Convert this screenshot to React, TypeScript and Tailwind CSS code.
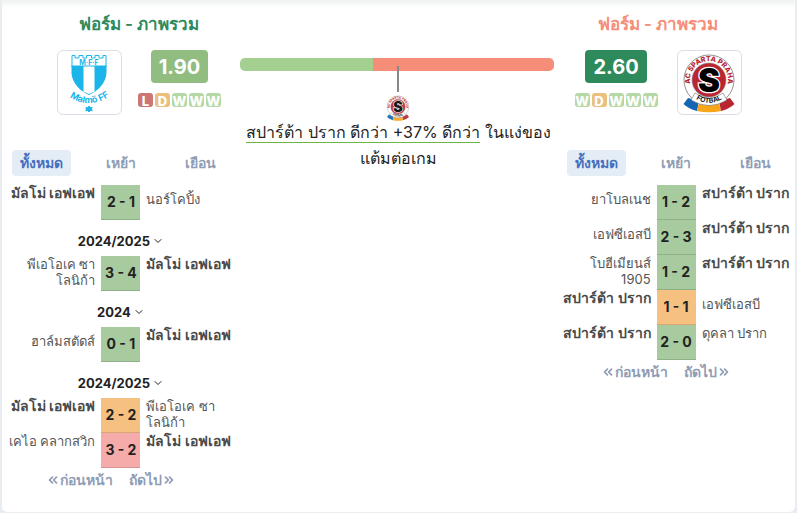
import React, { useState } from 'react';
import { ChevronDown, ChevronsLeft, ChevronsRight } from 'lucide-react';

type Result = 'W' | 'D' | 'L';

type Match = {
  home: string;
  away: string;
  score: string;
  result: Result;
  own: 'home' | 'away';
};

type Season = {
  name?: string;
  matches: Match[];
};

// keeps the last syllables of the name on one line
const PAOK = 'พีเอโอเค ซา\u200bโลนิ\u2060ก้า';

const malmoSeasons: Season[] = [
  {
    matches: [
      { home: 'มัลโม่ เอฟเอฟ', away: 'นอร์โคปิ้ง', score: '2 - 1', result: 'W', own: 'home' },
    ],
  },
  {
    name: '2024/2025',
    matches: [
      { home: PAOK, away: 'มัลโม่ เอฟเอฟ', score: '3 - 4', result: 'W', own: 'away' },
    ],
  },
  {
    name: '2024',
    matches: [
      { home: 'ฮาล์มสตัดส์', away: 'มัลโม่ เอฟเอฟ', score: '0 - 1', result: 'W', own: 'away' },
    ],
  },
  {
    name: '2024/2025',
    matches: [
      { home: 'มัลโม่ เอฟเอฟ', away: PAOK, score: '2 - 2', result: 'D', own: 'home' },
      { home: 'เคไอ คลากสวิก', away: 'มัลโม่ เอฟเอฟ', score: '3 - 2', result: 'L', own: 'away' },
    ],
  },
];

const spartaSeasons: Season[] = [
  {
    matches: [
      { home: 'ยาโบลเนช', away: 'สปาร์ต้า ปราก', score: '1 - 2', result: 'W', own: 'away' },
      { home: 'เอฟซีเอสบี', away: 'สปาร์ต้า ปราก', score: '2 - 3', result: 'W', own: 'away' },
      { home: 'โบฮีเมียนส์ 1905', away: 'สปาร์ต้า ปราก', score: '1 - 2', result: 'W', own: 'away' },
      { home: 'สปาร์ต้า ปราก', away: 'เอฟซีเอสบี', score: '1 - 1', result: 'D', own: 'home' },
      { home: 'สปาร์ต้า ปราก', away: 'ดุคลา ปราก', score: '2 - 0', result: 'W', own: 'home' },
    ],
  },
];

const scoreColors = {
  W: 'bg-[#a7cb9e] border-[#8eb187]',
  D: 'bg-[#f6c180] border-[#d6a674]',
  L: 'bg-[#f6abab] border-[#d69292]',
};

const badgeColors = {
  W: 'bg-[#b5d8a5]',
  D: 'bg-[#ebbf7d]',
  L: 'bg-[#cc7675]',
};

const MalmoLogo = () => (
  <svg viewBox="0 0 60 60" className="h-[60px] w-[60px]" role="img">
    <path
      d="M13 14V2.500H16V5H20V2.500H24V5H27.500V2.500H32.500V5H36V2.500H40V5H44V2.500H47V14Z"
      fill="#fff"
      stroke="#1cb5ea"
      strokeWidth="1"
    />
    <path d="M12.500 12.500H47.500V20C47 30 39 38 30 42C21 38 13 30 12.500 20Z" fill="#1cb5ea" />
    <path d="M24.500 13.500H35.500V38.500L30 41L24.500 38.500Z" fill="#fff" />
    <text x="30" y="11.500" textAnchor="middle" fontSize="7" fontWeight="700" fill="#1cb5ea">
      M·F·F
    </text>
    <path id="malmo-arc" d="M9 43Q30 58 52 42" fill="none" />
    <text fontSize="9" fontWeight="700" fill="#1cb5ea" textAnchor="middle">
      <textPath href="#malmo-arc" startOffset="50%">Malmö FF</textPath>
    </text>
    <path
      d="M30 53L31.300 54.700L33.200 54.500L32.500 56L33.200 57.800L31.300 57.500L30 59L28.700 57.500L26.800 57.800L27.500 56L26.800 54.500L28.700 54.700Z"
      fill="#1cb5ea"
      stroke="#1cb5ea"
    />
  </svg>
);

const SpartaLogo = ({ id, className }: { id: string; className: string }) => (
  <svg viewBox="0 0 60 60" className={className} role="img">
    <path d="M9 45L4.500 51Q9 55.500 18 58L20 48Z" fill="#1565b5" />
    <path d="M20 50L18 58Q30 60.500 42 58L40 50Z" fill="#f9a51a" />
    <path d="M51 45L55.500 51Q51 55.500 42 58L40 48Z" fill="#b92530" />
    <circle cx="30" cy="27" r="25" fill="#fff" stroke="#777" strokeWidth="0.800" />
    <circle cx="30" cy="27" r="17" fill="#b92530" stroke="#8d8d8d" strokeWidth="0.600" />
    <path d="M16 40Q30 51 44 40L48 47Q30 58 12 47Z" fill="#fff" stroke="#555" strokeWidth="0.500" />
    <path id={`${id}-top`} d="M13.200 36A19 19 0 1 1 46.800 36" fill="none" />
    <text fontSize="7" fontWeight="800" fill="#b92530" textAnchor="middle">
      <textPath href={`#${id}-top`} startOffset="50%">AC SPARTA PRAHA</textPath>
    </text>
    <path id={`${id}-bottom`} d="M13 43Q30 57 47 43" fill="none" />
    <text fontSize="7" fontWeight="700" fill="#222" textAnchor="middle">
      <textPath href={`#${id}-bottom`} startOffset="50%">FOTBAL</textPath>
    </text>
    <text
      x="30"
      y="38.500"
      textAnchor="middle"
      fontSize="33"
      fontWeight="900"
      fill="#000"
      stroke="#fff"
      strokeWidth="2.500"
      paintOrder="stroke"
    >
      S
    </text>
  </svg>
);

const FormBadges = ({ form }: { form: Result[] }) => (
  <ul className="flex gap-0.5">
    {form.map((item, index) => (
      <li
        key={index}
        className={`flex h-3.5 w-[15px] justify-center rounded-[3px] text-[13px] leading-4 font-extrabold text-white ${badgeColors[item]}`}
      >
        {item}
      </li>
    ))}
  </ul>
);

const LogoBox = ({ children }: { children: React.ReactNode }) => (
  <div className="flex h-[65px] w-[65px] shrink-0 items-center justify-center rounded-md border border-[#dcdde8] bg-white">
    {children}
  </div>
);

const TeamName = ({ name, own }: { name: string; own: boolean }) => (
  <span
    className={
      own
        ? 'block text-sm leading-4 font-semibold whitespace-nowrap text-[#4a4a4a]'
        : `block text-[13px] leading-4 text-[#555] ${name.includes(' ') ? '' : 'pt-1.5'}`
    }
  >
    {name}
  </span>
);

const MatchTable = ({ seasons }: { seasons: Season[] }) => {
  const [tab, setTab] = useState(0);
  return (
    <section>
      <div className="grid grid-cols-3">
        {['ทั้งหมด', 'เหย้า', 'เยือน'].map((label, index) => (
          <button
            key={label}
            type="button"
            onClick={() => setTab(index)}
            className={`mx-auto h-[26px] rounded-sm px-2 text-sm font-semibold ${
              tab === index ? 'bg-[#e4ecf6] text-[#4770c0]' : 'text-[#8f9db5]'
            }`}
          >
            {label}
          </button>
        ))}
      </div>
      <table className="mt-[9px] w-full table-fixed border-separate border-spacing-0 text-sm leading-4">
        <colgroup>
          <col />
          <col className="w-[39px]" />
          <col />
        </colgroup>
        {seasons.map((season, index) => (
          <tbody key={index}>
            {season.name && (
              <tr>
                <th colSpan={3} className="h-9 p-0 pt-1.5 leading-4">
                  <button
                    type="button"
                    className="inline-flex items-center gap-0.5 text-[13px] font-bold text-[#222]"
                  >
                    {season.name}
                    <ChevronDown size={12} />
                  </button>
                </th>
              </tr>
            )}
            {season.matches.map((match) => (
              <tr key={match.home + match.away}>
                <td className="h-[35px] p-0 pr-1.5 pl-1.5 text-right align-top">
                  <TeamName name={match.home} own={match.own === 'home'} />
                </td>
                <td
                  className={`h-[35px] border-b p-0 text-center align-middle font-bold whitespace-nowrap text-[#222] ${scoreColors[match.result]}`}
                >
                  {match.score}
                </td>
                <td className="h-[35px] p-0 pr-1.5 pl-1.5 text-left align-top">
                  <TeamName name={match.away} own={match.own === 'away'} />
                </td>
              </tr>
            ))}
          </tbody>
        ))}
      </table>
      <div className="flex justify-center gap-4 pr-5 text-sm leading-6 font-semibold text-[#8f9db5]">
        <button type="button" className="flex items-center">
          <ChevronsLeft size={14} strokeWidth={3} />
          ก่อนหน้า
        </button>
        <button type="button" className="flex items-center">
          ถัดไป
          <ChevronsRight size={14} strokeWidth={3} />
        </button>
      </div>
    </section>
  );
};

const App = () => {
  return (
    <div className="bg-[#e9edf2] px-0.5 pb-px [font-family:Inter,sans-serif]">
      <main className="min-h-[512px] rounded-b-md bg-white">
        <div className="h-2 bg-gradient-to-b from-[#eff2f1] to-white" />
        <div className="grid grid-cols-[minmax(0,3fr)_minmax(0,4fr)_minmax(0,3fr)] pt-1">
          <div>
            <header className="flex flex-col items-center gap-3.5 pl-9">
              <h2 className="text-[17px] leading-6 font-semibold text-[#2f8a5b]">ฟอร์ม - ภาพรวม</h2>
              <div className="flex justify-center gap-4">
                <LogoBox>
                  <MalmoLogo />
                </LogoBox>
                <div className="flex flex-col items-center gap-2.5">
                  <strong className="rounded-sm bg-[#92bd81] px-2 pt-[3px] pb-px text-xl leading-[29px] font-bold text-white">
                    1.90
                  </strong>
                  <FormBadges form={['L', 'D', 'W', 'W', 'W']} />
                </div>
              </div>
            </header>
            <div className="pt-[35px]">
              <MatchTable seasons={malmoSeasons} />
            </div>
          </div>

          <div className="flex flex-col items-center pt-[46px]">
            <div className="w-full pr-[3px]">
              <div className="flex h-[13px] overflow-hidden rounded-[5px]">
                <div className="w-[42.4%] bg-[#a3cf91]" />
                <div className="flex-1 bg-[#f68d78]" />
              </div>
            </div>
            <div className="relative -mt-[5px] h-[26px] w-0.5 bg-[#888]" />
            <SpartaLogo id="sparta-small" className="mt-[3px] h-[26px] w-[26px] opacity-90" />
            <p className="-mt-0.5 text-center text-base leading-[26px] text-[#222]">
              <span className="border-b border-[#6fb544]">สปาร์ต้า ปราก ดีกว่า +37% ดีกว่า</span>{' '}
              ในแง่ของ แต้มต่อเกม
            </p>
          </div>

          <div>
            <header className="flex flex-col items-center gap-3.5 pr-9">
              <h2 className="text-[17px] leading-6 font-semibold text-[#f68d78]">ฟอร์ม - ภาพรวม</h2>
              <div className="flex justify-center gap-[19px]">
                <div className="flex flex-col items-center gap-2.5">
                  <strong className="rounded-sm bg-[#2f8a5b] px-2 pt-[3px] pb-px text-xl leading-[29px] font-bold text-white">
                    2.60
                  </strong>
                  <FormBadges form={['W', 'D', 'W', 'W', 'W']} />
                </div>
                <LogoBox>
                  <SpartaLogo id="sparta" className="h-[60px] w-[60px]" />
                </LogoBox>
              </div>
            </header>
            <div className="pt-[35px]">
              <MatchTable seasons={spartaSeasons} />
            </div>
          </div>
        </div>
      </main>
    </div>
  );
};

export default App;
